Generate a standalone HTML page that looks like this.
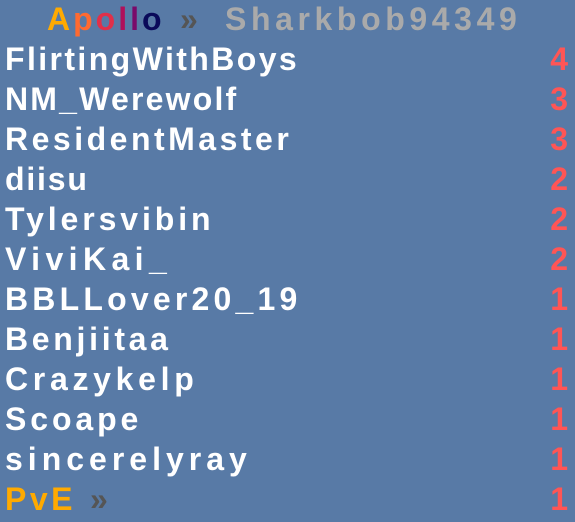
<!DOCTYPE html>
<html><head><meta charset="utf-8"><style>
html,body{margin:0;padding:0;}
body{width:575px;height:522px;background:#587aa6;position:relative;overflow:hidden;font-family:"Liberation Sans",sans-serif;font-weight:bold;font-size:32px;line-height:32px;color:#fff;}
.r{position:absolute;left:5px;white-space:nowrap;letter-spacing:2.4px;}
.n{position:absolute;right:7px;color:#ff5555;}
.h{position:absolute;top:3px;white-space:nowrap;}
</style></head><body>
<div class="h" style="left:47px;letter-spacing:3px"><span style="color:#ffaa00">A</span><span style="color:#ff6a30">p</span><span style="color:#e0304a">o</span><span style="color:#b0105a">l</span><span style="color:#7a0a6a">l</span><span style="color:#0a0a5a">o</span></div>
<div class="h" style="left:180px;color:#555">»</div>
<div class="h" style="left:225px;color:#aaa;letter-spacing:4.6px">Sharkbob94349</div>
<div class="r" style="top:43px">FlirtingWithBoys</div><div class="n" style="top:43px">4</div>
<div class="r" style="top:83px;letter-spacing:2.2px">NM_Werewolf</div><div class="n" style="top:83px">3</div>
<div class="r" style="top:123px;letter-spacing:3.5px">ResidentMaster</div><div class="n" style="top:123px">3</div>
<div class="r" style="top:163px;letter-spacing:1.8px">diisu</div><div class="n" style="top:163px">2</div>
<div class="r" style="top:203px;letter-spacing:3.9px">Tylersvibin</div><div class="n" style="top:203px">2</div>
<div class="r" style="top:243px;letter-spacing:5.4px">ViviKai_</div><div class="n" style="top:243px">2</div>
<div class="r" style="top:283px;letter-spacing:4.2px">BBLLover20_19</div><div class="n" style="top:283px">1</div>
<div class="r" style="top:323px;letter-spacing:3.7px">Benjiitaa</div><div class="n" style="top:323px">1</div>
<div class="r" style="top:363px;letter-spacing:4.7px">Crazykelp</div><div class="n" style="top:363px">1</div>
<div class="r" style="top:403px;letter-spacing:3.9px">Scoape</div><div class="n" style="top:403px">1</div>
<div class="r" style="top:443px;letter-spacing:5px">sincerelyray</div><div class="n" style="top:443px">1</div>
<div class="r" style="top:483px;color:#ffaa00;letter-spacing:3.5px">PvE</div><div class="h" style="top:483px;left:90px;color:#555">»</div><div class="n" style="top:483px">1</div>
</body></html>
